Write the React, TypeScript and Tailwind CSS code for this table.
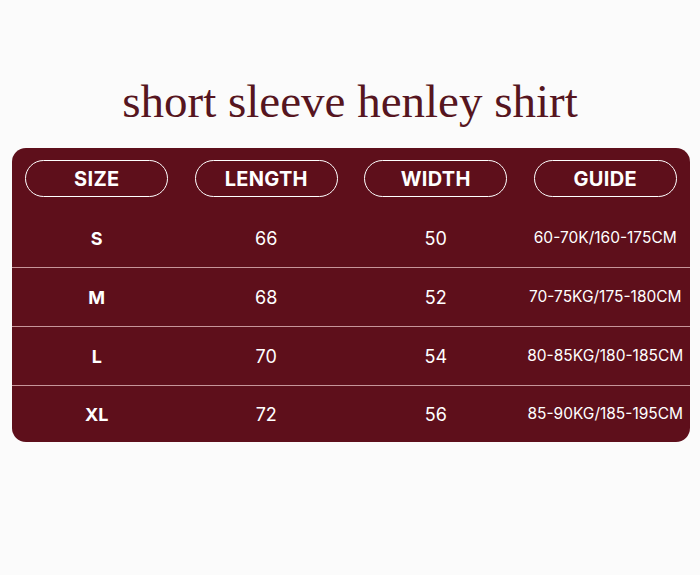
import React from "react";

const rows = [
  { size: "S", length: "66", width: "50", guide: "60-70K/160-175CM" },
  { size: "M", length: "68", width: "52", guide: "70-75KG/175-180CM" },
  { size: "L", length: "70", width: "54", guide: "80-85KG/180-185CM" },
  { size: "XL", length: "72", width: "56", guide: "85-90KG/185-195CM" },
];

const headers = ["SIZE", "LENGTH", "WIDTH", "GUIDE"];

export default function App() {
  return (
    <div className="w-[700px] h-[575px] bg-[#fbfbfb] overflow-hidden" style={{ fontFamily: "Inter, 'Liberation Sans', sans-serif" }}>
      <div className="pt-[75px] h-[148px] text-center">
        <h1
          className="text-[47px] leading-[52px] text-[#561520] whitespace-nowrap"
          style={{ fontFamily: "'Liberation Serif', 'DejaVu Serif', serif" }}
        >
          short sleeve henley shirt
        </h1>
      </div>
      <div className="mx-[12px] w-[678px] bg-[#5e0f1b] rounded-[14px] overflow-hidden text-white">
        <div className="grid grid-cols-4 pt-[12px] pb-[12px]">
          {headers.map((h) => (
            <div key={h} className="flex justify-center">
              <div className="w-[143px] h-[37px] rounded-full border-[1.5px] border-white flex items-center justify-center text-[20px] font-bold tracking-[0.3px]">
                {h}
              </div>
            </div>
          ))}
        </div>
        {rows.map((r, i) => (
          <div
            key={r.size}
            className={`grid grid-cols-4 items-center ${i < 3 ? "h-[59px] border-b-[1.5px] border-[#c7959a]" : "h-[56px]"}`}
          >
            <div className="text-center text-[18px] font-bold">{r.size}</div>
            <div className="text-center text-[18px]">{r.length}</div>
            <div className="text-center text-[18px]">{r.width}</div>
            <div className="text-center text-[15.5px] whitespace-nowrap">{r.guide}</div>
          </div>
        ))}
      </div>
    </div>
  );
}
